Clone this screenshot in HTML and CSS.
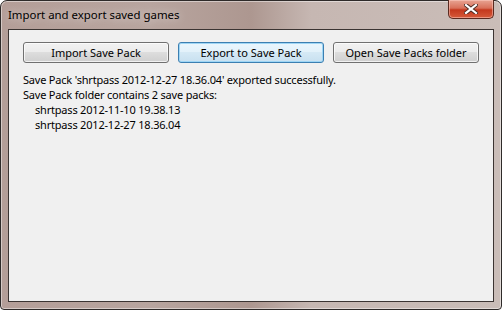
FILE: index.html
```html
<!DOCTYPE html>
<html lang="en">
<head>
    <meta charset="UTF-8">
    <title>Import and export saved games</title>
    <link rel="stylesheet" href="styles.css">
</head>
<body>
    <div class="window">
        <div class="titlebar">
            <span class="title">Import and export saved games</span>
            <button class="close" title="Close">
                <svg width="14" height="10" viewBox="0 0 14 10">
                    <path d="M2 1 L12 9 M12 1 L2 9" stroke="#4a2a22" stroke-width="4" stroke-linecap="square"/>
                    <path d="M2 1 L12 9 M12 1 L2 9" stroke="#ffffff" stroke-width="2.2" stroke-linecap="square"/>
                </svg>
            </button>
        </div>
        <div class="client">
            <div class="buttons">
                <button class="btn">Import Save Pack</button>
                <button class="btn default">Export to Save Pack</button>
                <button class="btn">Open Save Packs folder</button>
            </div>
            <div class="log">
                <div>Save Pack 'shrtpass 2012-12-27 18.36.04' exported successfully.</div>
                <div>Save Pack folder contains 2 save packs:</div>
                <div class="item">shrtpass 2012-11-10 19.38.13</div>
                <div class="item">shrtpass 2012-12-27 18.36.04</div>
            </div>
        </div>
    </div>
</body>
</html>
```

FILE: styles.css
```css
body {
    margin: 0;
    background-color: #ffffff;
    font-family: "Noto Sans", "Open Sans", sans-serif;
    font-size: 11px;
    color: #000000;
}

.window {
    width: 502px;
    height: 310px;
    box-sizing: border-box;
    display: flex;
    flex-direction: column;
    padding: 0 7px 7px 7px;
    border: 1px solid #2e2a29;
    border-radius: 7px 7px 4px 4px;
    background: linear-gradient(90deg, #b49e98 0%, #b8a59f 30%, #ad9790 50%, #c6b7b2 62%, #cabdb8 100%);
    box-shadow: inset 0 0 0 1px rgba(255, 255, 255, 0.45);
}

.titlebar {
    height: 28px;
    display: flex;
    align-items: flex-start;
    justify-content: space-between;
}

.title {
    margin-top: 6px;
    font-size: 11.4px;
    color: #000000;
    text-shadow: 0 0 8px rgba(255, 255, 255, 0.7);
}

.close {
    width: 46px;
    height: 19px;
    margin: -1px 0 0 0;
    padding: 0;
    display: flex;
    align-items: center;
    justify-content: center;
    border: 1px solid #5a2a20;
    border-top: none;
    border-radius: 0 0 5px 5px;
    background: linear-gradient(#e8a493 0%, #d8705a 45%, #c4381d 55%, #d55a3a 100%);
    box-shadow: inset 0 0 0 1px rgba(255, 210, 200, 0.5);
}

.client {
    flex: 1;
    background-color: #f0f0f0;
    border: 1px solid #3b3432;
    padding: 12px 14px;
}

.buttons {
    display: flex;
    gap: 9px;
}

.btn {
    width: 147px;
    height: 21px;
    padding: 0;
    font-family: inherit;
    font-size: 11px;
    color: #000000;
    border: 1px solid #707070;
    border-radius: 3px;
    background: linear-gradient(#f2f2f2 0%, #ebebeb 50%, #dddddd 50%, #cfcfcf 100%);
    box-shadow: inset 0 0 0 1px rgba(255, 255, 255, 0.7);
}

.btn.default {
    border-color: #3c7fb1;
    background: linear-gradient(#eaf6fd 0%, #e2f1fa 50%, #d5e9f5 50%, #c8e0f0 100%);
    box-shadow: inset 0 0 0 1px #9fd6f5;
}

.log {
    margin-top: 9px;
    line-height: 15px;
    letter-spacing: -0.2px;
}

.item {
    padding-left: 12px;
}
```
